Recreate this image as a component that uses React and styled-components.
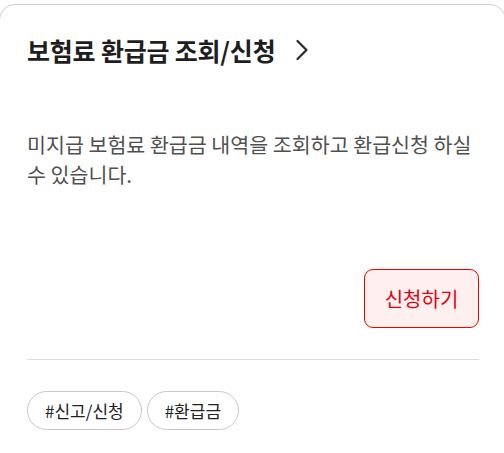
import React from 'react';
import styled, { createGlobalStyle } from 'styled-components';

const GlobalStyle = createGlobalStyle`
  html, body {
    margin: 0;
    padding: 0;
    background: #fff;
    overflow: hidden;
  }
  body {
    font-family: "Noto Sans CJK KR", "Noto Sans", sans-serif;
  }
`;

const Page = styled.div`
  width: 504px;
  height: 453px;
  overflow: hidden;
`;

const Card = styled.div`
  margin: 4px -2px 0 -1px;
  border: 1px solid #cfcfcf;
  border-radius: 16px;
  background: #fff;
  padding: 29px 26px 40px 27px;
  min-height: 500px;
  box-sizing: border-box;
`;

const TitleRow = styled.a`
  display: inline-flex;
  align-items: center;
  gap: 20px;
  color: #1e1e1e;
  text-decoration: none;
  height: 32px;
`;

const Title = styled.h2`
  margin: 0;
  font-size: 25px;
  font-weight: 700;
  letter-spacing: -0.2px;
  line-height: 32px;
`;

const Description = styled.p`
  margin: 63px 0 0;
  font-size: 20.6px;
  line-height: 30px;
  color: #505050;
  letter-spacing: 0;
`;

const Actions = styled.div`
  display: flex;
  justify-content: flex-end;
  margin-top: 80px;
`;

const ApplyButton = styled.button`
  width: 115px;
  height: 59px;
  border: 1px solid #f00000;
  border-radius: 9px;
  background: #fff0f0;
  color: #e60012;
  font-family: inherit;
  font-size: 20px;
  cursor: pointer;
`;

const Divider = styled.hr`
  margin: 31px 0 0;
  border: none;
  border-top: 1px solid #dcdcdc;
`;

const Tags = styled.div`
  display: flex;
  gap: 5px;
  margin-top: 31px;
`;

const Tag = styled.span`
  display: inline-flex;
  align-items: center;
  height: 39px;
  padding: 0 17px;
  box-sizing: border-box;
  border: 1px solid #c8c8c8;
  border-radius: 20px;
  font-size: 17px;
  color: #222;
`;

const Chevron = () => (
  <svg width="15" height="22" viewBox="0 0 15 22" fill="none">
    <path d="M2.5 2l9 9-9 9" stroke="#2a2a2a" strokeWidth="2.2" strokeLinecap="round" strokeLinejoin="round" />
  </svg>
);

export default function App() {
  return (
    <Page>
      <GlobalStyle />
      <Card>
        <TitleRow href="#">
          <Title>보험료 환급금 조회/신청</Title>
          <Chevron />
        </TitleRow>
        <Description>
          미지급 보험료 환급금 내역을 조회하고 환급신청 하실 수 있습니다.
        </Description>
        <Actions>
          <ApplyButton>신청하기</ApplyButton>
        </Actions>
        <Divider />
        <Tags>
          <Tag>#신고/신청</Tag>
          <Tag>#환급금</Tag>
        </Tags>
      </Card>
    </Page>
  );
}
